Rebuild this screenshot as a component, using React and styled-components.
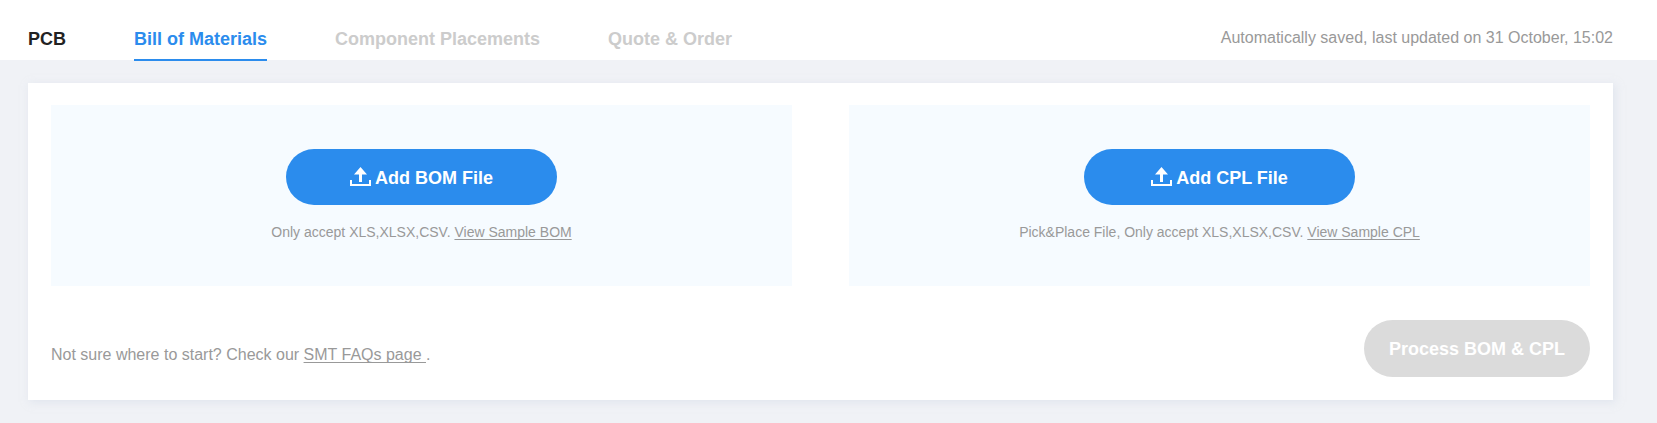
import React from "react";
import styled, { createGlobalStyle } from "styled-components";

const GlobalStyle = createGlobalStyle`
  * { box-sizing: border-box; }
  body {
    margin: 0;
    background: #f0f2f6;
    font-family: "Liberation Sans", Arial, sans-serif;
    color: #999;
  }
`;

const Header = styled.header`
  display: flex;
  justify-content: space-between;
  align-items: flex-start;
  height: 60px;
  padding: 0 44px 0 28px;
  background: #fff;
`;

const Tabs = styled.nav`
  display: flex;
  gap: 68px;
`;

const Tab = styled.a`
  height: 61px;
  padding-top: 28px;
  font-size: 18px;
  font-weight: 700;
  line-height: 22px;
  text-decoration: none;
  white-space: nowrap;
  color: ${({ $state }) =>
    $state === "active" ? "#2b8ced" : $state === "done" ? "#222" : "#ccc"};
  border-bottom: 2px solid
    ${({ $state }) => ($state === "active" ? "#2b8ced" : "transparent")};
`;

const SaveStatus = styled.p`
  margin: 0;
  padding-top: 28px;
  font-size: 16px;
  line-height: 20px;
  white-space: nowrap;
`;

const Card = styled.main`
  margin: 23px 44px 22px 28px;
  padding: 22px 23px 23px;
  background: #fff;
  box-shadow: 2px 2px 8px rgba(208, 215, 230, 0.5);
`;

const Uploads = styled.div`
  display: grid;
  grid-template-columns: 1fr 1fr;
  gap: 57px;
`;

const UploadPanel = styled.section`
  display: flex;
  flex-direction: column;
  align-items: center;
  gap: 17px;
  padding: 44px 20px;
  background: #f6fbff;
`;

const PillButton = styled.button`
  display: flex;
  align-items: center;
  justify-content: center;
  gap: 4px;
  height: 56px;
  padding: 2px 24px 0;
  border: 0;
  border-radius: 28px;
  background: #2b8ced;
  color: #fff;
  font: 700 18px/22px "Liberation Sans", Arial, sans-serif;
  white-space: nowrap;
  cursor: pointer;

  &:disabled {
    background: #dbdbdb;
    cursor: not-allowed;
  }
`;

const UploadButton = styled(PillButton)`
  width: 271px;
`;

const ProcessButton = styled(PillButton)`
  min-width: 226px;
  height: 57px;
  padding-top: 0;
  border-radius: 29px;
`;

const Hint = styled.p`
  margin: 0;
  font-size: 14px;
  line-height: 20px;
`;

const TextLink = styled.a`
  color: inherit;
  text-decoration: underline 1px;
  text-underline-offset: 2px;
  text-decoration-skip-ink: none;
`;

const Footer = styled.footer`
  display: flex;
  justify-content: space-between;
  align-items: center;
  margin-top: 34px;
`;

const Help = styled.p`
  margin: 0;
  padding-top: 13px;
  font-size: 16px;
  line-height: 20px;
`;

const UploadIcon = () => (
  <svg width="21" height="22" viewBox="0 0 21 22" fill="#fff" aria-hidden="true">
    <path d="M10.5 0 L17 7.5 H12 V15 H9 V7.5 H4 Z" />
    <path d="M0 13 H2 V17 H19 V13 H21 V19 H0 Z" />
  </svg>
);

const Upload = ({ label, hint, sample }) => (
  <UploadPanel>
    <UploadButton type="button">
      <UploadIcon />
      {label}
    </UploadButton>
    <Hint>
      {hint} <TextLink href="#sample">{sample}</TextLink>
    </Hint>
  </UploadPanel>
);

const tabs = [
  { label: "PCB", state: "done" },
  { label: "Bill of Materials", state: "active" },
  { label: "Component Placements", state: "upcoming" },
  { label: "Quote & Order", state: "upcoming" },
];

export default function App() {
  return (
    <>
      <GlobalStyle />
      <Header>
        <Tabs>
          {tabs.map(({ label, state }) => (
            <Tab
              key={label}
              href="#step"
              $state={state}
              aria-current={state === "active" ? "step" : undefined}
            >
              {label}
            </Tab>
          ))}
        </Tabs>
        <SaveStatus>
          Automatically saved, last updated on 31 October, 15:02
        </SaveStatus>
      </Header>
      <Card>
        <Uploads>
          <Upload
            label="Add BOM File"
            hint="Only accept XLS,XLSX,CSV."
            sample="View Sample BOM"
          />
          <Upload
            label="Add CPL File"
            hint="Pick&Place File, Only accept XLS,XLSX,CSV."
            sample="View Sample CPL"
          />
        </Uploads>
        <Footer>
          <Help>
            Not sure where to start? Check our{" "}
            <TextLink href="#faq">SMT FAQs page </TextLink>.
          </Help>
          <ProcessButton type="button" disabled>
            Process BOM &amp; CPL
          </ProcessButton>
        </Footer>
      </Card>
    </>
  );
}
